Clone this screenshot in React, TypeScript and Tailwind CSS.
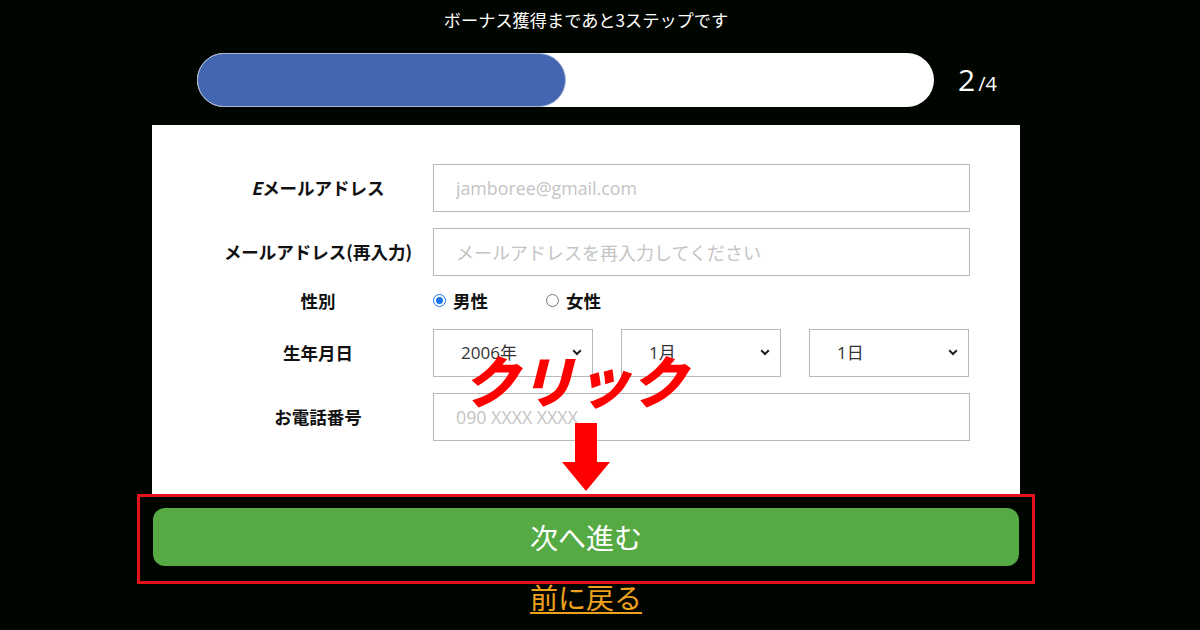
import React from "react";

const jp = { fontFamily: '"Noto Sans CJK JP", "Noto Sans", sans-serif' };
const latin = { fontFamily: '"Open Sans", "Noto Sans CJK JP", sans-serif' };

function Row({ label, children }: { label: React.ReactNode; children: React.ReactNode }) {
  return (
    <div className="flex h-full items-center">
      <div className="ml-[68px] w-[196px] shrink-0 text-center text-[17.5px] font-bold leading-none text-[#111]">
        {label}
      </div>
      <div className="ml-[17px] w-[537px]">{children}</div>
    </div>
  );
}

function TextField({ placeholder, jpText }: { placeholder: string; jpText?: boolean }) {
  return (
    <input
      type="text"
      placeholder={placeholder}
      style={jpText ? jp : latin}
      className={`block h-[48px] w-full border border-[#b8b8b8] bg-white pl-[22px] text-[#333] outline-none placeholder:text-[#c4c4c4] ${
        jpText ? "text-[18px]" : "text-[17.8px]"
      }`}
    />
  );
}

function Select({ value, options }: { value: string; options: string[] }) {
  return (
    <div className="relative w-[160px]">
      <select
        defaultValue={value}
        style={latin}
        className="block h-[48px] w-full appearance-none border border-[#b8b8b8] bg-white pl-[27px] text-[17px] text-[#333] outline-none"
      >
        {options.map((o) => (
          <option key={o}>{o}</option>
        ))}
      </select>
      <svg
        className="pointer-events-none absolute right-[11px] top-[20px]"
        width="10"
        height="7"
        viewBox="0 0 10 7"
      >
        <path d="M1.2 1.2 L5 5 L8.8 1.2" fill="none" stroke="#222" strokeWidth="2" />
      </svg>
    </div>
  );
}

function Radio({ checked, label }: { checked?: boolean; label: string }) {
  return (
    <label className="flex items-center gap-[7px] text-[17.5px] font-bold leading-none text-[#111]">
      {checked ? (
        <span className="flex h-[13px] w-[13px] items-center justify-center rounded-full border-[1.5px] border-[#1a73e8] bg-white">
          <span className="h-[7px] w-[7px] rounded-full bg-[#1a73e8]" />
        </span>
      ) : (
        <span className="h-[13px] w-[13px] rounded-full border border-[#767676] bg-white" />
      )}
      {label}
    </label>
  );
}

export default function App() {
  return (
    <div className="relative h-[630px] w-[1200px] overflow-hidden bg-[#010500]" style={jp}>
      <div className="flex w-[1172px] flex-col items-center">
        <p className="pt-[8px] text-[17.2px] leading-[24px] text-white">
          ボーナス獲得まであと3ステップです
        </p>

        <div className="mt-[21px] flex w-[868px] items-center pl-[45px]">
          <div className="h-[54px] w-[737px] rounded-full bg-white">
            <div className="h-full w-1/2 rounded-full border border-[#a9b6d6] bg-[#4267b0]" />
          </div>
          <div className="ml-[24px] flex items-baseline text-white" style={latin}>
            <span className="text-[30px] leading-none">2</span>
            <span className="ml-[3px] text-[20px] leading-none">/4</span>
          </div>
        </div>

        <div className="mt-[18px] w-[868px] bg-white pb-[53px] pt-[39px]">
          <Row
            label={
              <>
                <span className="italic">E</span>メールアドレス
              </>
            }
          >
            <TextField placeholder="jamboree@gmail.com" />
          </Row>
          <div className="mt-[16px]">
            <Row label="メールアドレス(再入力)">
              <TextField placeholder="メールアドレスを再入力してください" jpText />
            </Row>
          </div>
          <div className="mb-[16px] mt-[12px] h-[25px]">
            <Row label="性別">
              <div className="flex items-center gap-[58px]">
                <Radio checked label="男性" />
                <Radio label="女性" />
              </div>
            </Row>
          </div>
          <Row label="生年月日">
            <div className="flex gap-[28px]">
              <Select value="2006年" options={["2005年", "2006年", "2007年"]} />
              <Select value="1月" options={["1月", "2月", "3月"]} />
              <Select value="1日" options={["1日", "2日", "3日"]} />
            </div>
          </Row>
          <div className="mt-[16px]">
            <Row label="お電話番号">
              <TextField placeholder="090 XXXX XXXX" />
            </Row>
          </div>
        </div>

        <div className="w-[898px] border-[3px] border-[#e3141b] px-[13px] pb-[15px] pt-[11px]">
          <button className="flex h-[58px] w-full items-center justify-center rounded-[12px] bg-[#55aa44] text-[28px] text-white">
            次へ進む
          </button>
        </div>

        <a href="#" className="-mt-[2px] text-[28px] leading-[30px] text-[#eea21c] underline underline-offset-[3px]">
          前に戻る
        </a>
      </div>

      <div className="pointer-events-none absolute left-[463px] top-[347px] text-[56px] font-black italic leading-[64px] text-[#ff0000]">
        クリック
      </div>
      <svg
        className="pointer-events-none absolute left-[562px] top-[423px]"
        width="48"
        height="68"
        viewBox="0 0 48 68"
      >
        <rect x="13" y="0" width="22" height="40" fill="#ff0000" />
        <polygon points="0,39 48,39 24,68" fill="#ff0000" />
      </svg>
    </div>
  );
}
